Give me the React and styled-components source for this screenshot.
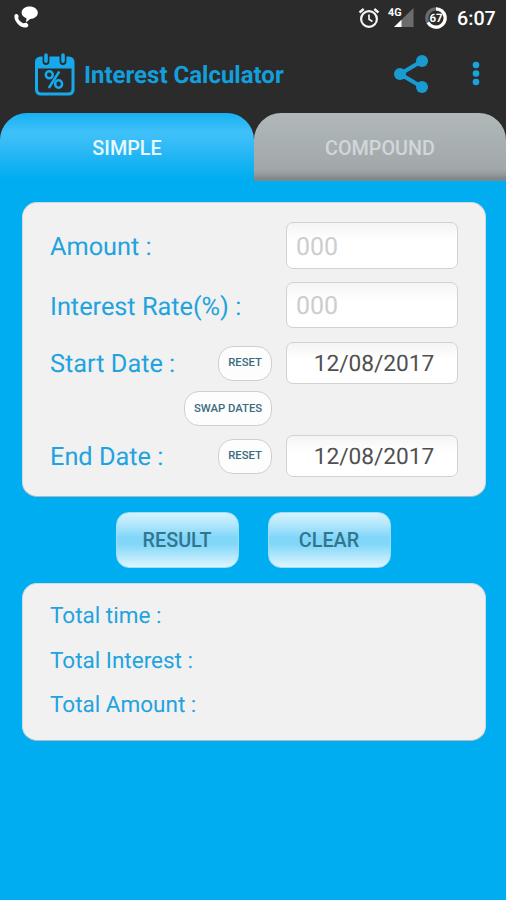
import React from "react";
import styled, { createGlobalStyle } from "styled-components";

const GlobalStyle = createGlobalStyle`
  * { box-sizing: border-box; }
  body { margin: 0; background: #00adf0; }
  button, input { font-family: inherit; margin: 0; outline: none; }
`;

const Screen = styled.main`
  width: 506px;
  height: 900px;
  overflow: hidden;
  display: flex;
  flex-direction: column;
  background: #00adf0;
  font-family: Roboto, sans-serif;
  text-rendering: geometricPrecision;
`;

const StatusBar = styled.div`
  height: 36px;
  padding: 0 10px 0 12px;
  display: flex;
  align-items: center;
  background: #2b2b2b;
  color: #fff;
  svg { display: block; flex: none; }
`;

const StatusIcons = styled.div`
  margin-left: auto;
  display: flex;
  align-items: center;
`;

const Clock = styled.span`
  width: 39px;
  margin-left: 9px;
  padding-top: 1px;
  font-size: 19.7px;
  font-weight: 500;
  line-height: 36px;
  white-space: nowrap;
`;

const AppBar = styled.header`
  height: 77px;
  padding: 0 26px 0 34px;
  display: flex;
  align-items: center;
  background: #2b2b2b;
  svg { display: block; flex: none; }
`;

const Title = styled.h1`
  margin: 0 0 0 8px;
  flex: 1;
  color: #139fdc;
  font-size: 24px;
  font-weight: 700;
  line-height: 30px;
  white-space: nowrap;
`;

const IconButton = styled.button`
  padding: 0 0 2px;
  border: 0;
  background: none;
  margin-left: ${(p) => p.$gap || 0}px;
`;

const Tabs = styled.nav`
  height: 68px;
  display: grid;
  grid-template-columns: 254px 252px;
  background: #2b2b2b;
`;

const Tab = styled.button`
  height: 68px;
  padding: 2px 0 0;
  border: 0;
  border-radius: 27px 27px 0 0;
  font-size: 19.8px;
  font-weight: 500;
  color: ${(p) => (p.$active ? "#e9f8ff" : "#d0d7da")};
  background: ${(p) =>
    p.$active
      ? "linear-gradient(#16b1f3 0, #3fc0f9 19px, #3bbef8 26px, #1cb4f3 47px, #00adf0 66px)"
      : "linear-gradient(#b0b8ba 0, #a2a8aa 56px, #969b9c 61px, #7f8586 66px, #7a8c91 68px)"};
`;

const Card = styled.section`
  width: 464px;
  margin: ${(p) => p.$top}px 0 0 22px;
  border: 1px solid #cfdbdf;
  border-bottom-color: #a9bcc4;
  border-radius: 15px;
  background: #f1f1f1;
`;

const FormCard = styled(Card)`
  height: 295px;
  padding: 19px 27px 0;
`;

const ResultCard = styled(Card)`
  height: 158px;
  padding: 10px 27px 0;
`;

const Row = styled.div`
  height: ${(p) => p.$height}px;
  margin-bottom: ${(p) => p.$after || 0}px;
  display: flex;
  align-items: center;
`;

const Label = styled.label`
  flex: 1;
  color: #22a3df;
  font-size: 25.3px;
  line-height: 30px;
  white-space: nowrap;
  padding-top: ${(p) => (p.$low ? 5 : 4)}px;
`;

const Field = styled.input`
  width: 172px;
  height: 100%;
  margin-left: 14px;
  border: 1.5px solid #d2d2d2;
  border-radius: 7px;
  background: linear-gradient(#f4f4f4, #fff 40%);
  padding: ${(p) => (p.$date ? "1px 0 0 4px" : "3px 9px 0")};
  text-align: ${(p) => (p.$date ? "center" : "left")};
  font-size: ${(p) => (p.$date ? 22.7 : 25)}px;
  color: #505050;
  text-rendering: geometricPrecision;
  &::placeholder { color: #cdcdcd; opacity: 1; }
`;

const Pill = styled.button`
  width: ${(p) => p.$width}px;
  height: 35px;
  padding: 0 0 1px;
  border: 1px solid #cfcfcf;
  border-radius: 15px;
  background: #fdfdfd;
  color: #3b6c7e;
  font-size: 11.3px;
  font-weight: 500;
  white-space: nowrap;
`;

const SwapRow = styled(Row)`
  padding-left: 134px;
`;

const Actions = styled.div`
  margin-top: 15px;
  display: flex;
  justify-content: center;
  gap: 29px;
  height: 56px;
`;

const ActionButton = styled.button`
  width: 123px;
  padding: 0;
  border: 1px solid #9bdffa;
  border-radius: 13px;
  background: linear-gradient(#d5f2fd 0, #b5e8fc 20%, #80d6f9 46%, #82d7f9 58%, #b2e7fc 80%, #dff5fe 100%);
  color: #33758f;
  font-size: 19.8px;
  font-weight: 500;
`;

const ResultLine = styled.div`
  height: 44.7px;
  color: #22a3df;
  font-size: 22.5px;
  line-height: 44px;
`;

const CallIcon = () => (
  <svg width="28" height="32" viewBox="0 1 28 32">
    <path d="M2.500 14c1-1.500 3.400-1 4 .7.4 1.200-.8 2 .1 3.600 1 1.800 2.500 3 4.200 3.800 1.500.7 2.200-.8 3.700-.2 1.800.8 2.600 2.800.9 4.100C10.200 28.800 1.200 21 2.500 14z" fill="#fff" />
    <path d="M17.500 5.600c4.700 0 8.300 2.700 8.300 6.200s-3.300 6-7.700 6.200l-4 3.600.4-4.300c-3-1-4.900-3.100-4.900-5.500 0-3.500 3.500-6.200 7.900-6.200z" fill="#fff" />
  </svg>
);

const AlarmIcon = () => (
  <svg width="22" height="22" viewBox="0 0 22 22" fill="none" stroke="#f5f5f5">
    <circle cx="11" cy="12" r="7.900" strokeWidth="2.200" />
    <path d="M1.500 5.500 5.700 2M20.500 5.500 16.300 2" strokeWidth="2.300" />
    <path d="M11 7.500V12.300l3.400 2.200" strokeWidth="1.700" />
  </svg>
);

const SignalIcon = () => (
  <svg width="27" height="24" viewBox="0 0 27 24">
    <path d="M26.500 2v19H7z" fill="#6c6c6c" />
    <path d="M14.500 13.700V21H7z" fill="#fff" />
    <text x="1" y="10" fontFamily="Roboto, sans-serif" fontSize="11" fontWeight="700" fill="#fff" stroke="#2b2b2b" strokeWidth="2" paintOrder="stroke" textLength="13.500" lengthAdjust="spacingAndGlyphs">4G</text>
  </svg>
);

const BatteryIcon = () => (
  <svg width="24" height="24" viewBox="0 0 24 24">
    <circle cx="12" cy="12" r="9.200" fill="none" stroke="#6b6b6b" strokeWidth="3.200" />
    <path d="M12 2.800A9.200 9.200 0 1 1 4 16.500" fill="none" stroke="#fff" strokeWidth="3.200" />
    <text x="12" y="16" textAnchor="middle" fontFamily="Roboto, sans-serif" fontSize="11.500" fontWeight="700" fill="#fff">67</text>
  </svg>
);

const CalendarIcon = () => (
  <svg width="42" height="44" viewBox="0 0 42 44">
    <path d="M6.500 3.500h28.500a5.500 5.500 0 0 1 5.500 5.500v28a5.500 5.500 0 0 1-5.500 5.500h-28.500A5.500 5.500 0 0 1 1 37V9A5.500 5.500 0 0 1 6.500 3.500z" fill="#16a9ec" />
    <path d="M4 15.500h33.500v20.500a3.500 3.500 0 0 1-3.500 3.500h-26.500A3.500 3.500 0 0 1 4 36z" fill="#2b2b2b" />
    <path d="M12 2v6.500M29 2v6.500" stroke="#2b2b2b" strokeWidth="6.800" strokeLinecap="round" />
    <path d="M12 2v6.200M29 2v6.200" stroke="#16a9ec" strokeWidth="3.600" strokeLinecap="round" />
    <g fill="none" stroke="#16a9ec" strokeWidth="2.500">
      <ellipse cx="15.300" cy="21.800" rx="3.500" ry="3.500" />
      <ellipse cx="24.600" cy="31" rx="3.500" ry="3.700" />
      <path d="M25.300 18.500 14.800 35" />
    </g>
  </svg>
);

const ShareIcon = () => (
  <svg width="36" height="40" viewBox="0 0 36 40">
    <path d="M29 7 7 20l22 13" fill="none" stroke="#189bd0" strokeWidth="4" />
    <g fill="#189bd0">
      <circle cx="29" cy="7" r="6" />
      <circle cx="7" cy="20" r="6" />
      <circle cx="29" cy="33" r="6" />
    </g>
  </svg>
);

const MoreIcon = () => (
  <svg width="8" height="26" viewBox="0 0 8 26" fill="#18a4df">
    <circle cx="4" cy="4" r="3.300" />
    <circle cx="4" cy="12.500" r="3.300" />
    <circle cx="4" cy="21" r="3.300" />
  </svg>
);

const StatusGap = styled.div`
  margin-left: ${(p) => p.$gap}px;
`;

export default function App() {
  return (
    <>
      <GlobalStyle />
      <Screen>
        <StatusBar>
          <CallIcon />
          <StatusIcons>
            <AlarmIcon />
            <StatusGap $gap={7}><SignalIcon /></StatusGap>
            <StatusGap $gap={10}><BatteryIcon /></StatusGap>
            <Clock>6:07</Clock>
          </StatusIcons>
        </StatusBar>
        <AppBar>
          <CalendarIcon />
          <Title>Interest Calculator</Title>
          <IconButton aria-label="Share"><ShareIcon /></IconButton>
          <IconButton aria-label="More" $gap={43}><MoreIcon /></IconButton>
        </AppBar>
        <Tabs>
          <Tab $active>SIMPLE</Tab>
          <Tab>COMPOUND</Tab>
        </Tabs>
        <FormCard $top={21}>
          <Row $height={47} $after={13}>
            <Label $low>Amount :</Label>
            <Field placeholder="000" />
          </Row>
          <Row $height={46} $after={14}>
            <Label $low>Interest Rate(%) :</Label>
            <Field placeholder="000" />
          </Row>
          <Row $height={42} $after={7}>
            <Label>Start Date :</Label>
            <Pill $width={54}>RESET</Pill>
            <Field $date defaultValue="12/08/2017" />
          </Row>
          <SwapRow $height={35} $after={9}>
            <Pill $width={88}>SWAP DATES</Pill>
          </SwapRow>
          <Row $height={42}>
            <Label>End Date :</Label>
            <Pill $width={54}>RESET</Pill>
            <Field $date defaultValue="12/08/2017" />
          </Row>
        </FormCard>
        <Actions>
          <ActionButton>RESULT</ActionButton>
          <ActionButton>CLEAR</ActionButton>
        </Actions>
        <ResultCard $top={15}>
          <ResultLine>Total time :</ResultLine>
          <ResultLine>Total Interest :</ResultLine>
          <ResultLine>Total Amount :</ResultLine>
        </ResultCard>
      </Screen>
    </>
  );
}
